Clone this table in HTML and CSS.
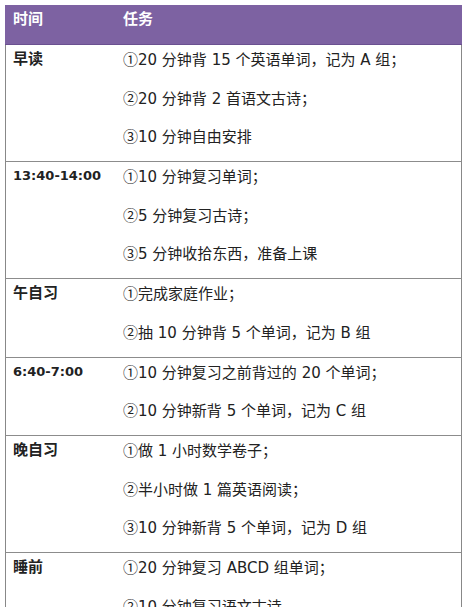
FILE: index.html
```html
<!DOCTYPE html>
<html lang="zh">
<head>
<meta charset="utf-8">
<link rel="stylesheet" href="styles.css">
</head>
<body>
<div class="schedule">
  <div class="head">
    <div class="c1">时间</div>
    <div class="c2">任务</div>
  </div>
  <div class="row">
    <div class="c1">早读</div>
    <div class="c2">
      <p><span class="n">①</span>20 分钟背 15 个英语单词，记为 A 组；</p>
      <p><span class="n">②</span>20 分钟背 2 首语文古诗；</p>
      <p><span class="n">③</span>10 分钟自由安排</p>
    </div>
  </div>
  <div class="row">
    <div class="c1 time">13:40-14:00</div>
    <div class="c2">
      <p><span class="n">①</span>10 分钟复习单词；</p>
      <p><span class="n">②</span>5 分钟复习古诗；</p>
      <p><span class="n">③</span>5 分钟收拾东西，准备上课</p>
    </div>
  </div>
  <div class="row">
    <div class="c1">午自习</div>
    <div class="c2">
      <p><span class="n">①</span>完成家庭作业；</p>
      <p><span class="n">②</span>抽 10 分钟背 5 个单词，记为 B 组</p>
    </div>
  </div>
  <div class="row">
    <div class="c1 time">6:40-7:00</div>
    <div class="c2">
      <p><span class="n">①</span>10 分钟复习之前背过的 20 个单词；</p>
      <p><span class="n">②</span>10 分钟新背 5 个单词，记为 C 组</p>
    </div>
  </div>
  <div class="row">
    <div class="c1">晚自习</div>
    <div class="c2">
      <p><span class="n">①</span>做 1 小时数学卷子；</p>
      <p><span class="n">②</span>半小时做 1 篇英语阅读；</p>
      <p><span class="n">③</span>10 分钟新背 5 个单词，记为 D 组</p>
    </div>
  </div>
  <div class="row">
    <div class="c1">睡前</div>
    <div class="c2">
      <p><span class="n">①</span>20 分钟复习 ABCD 组单词；</p>
      <p><span class="n">②</span>10 分钟复习语文古诗</p>
    </div>
  </div>
</div>
</body>
</html>
```
FILE: styles.css
```css
html, body {
  margin: 0;
  padding: 0;
  background: #ffffff;
}
body {
  font-family: "DejaVu Sans", "Noto Sans CJK SC", sans-serif;
  font-size: 15px;
  color: #222222;
}
.schedule {
  margin: 5px 0 0 5px;
  width: 457px;
}
.head {
  display: grid;
  grid-template-columns: 110px 1fr;
  background: #7d62a2;
  border-bottom: 1px solid #6a5090;
  color: #ffffff;
  font-weight: bold;
  padding: 4px 0 15px;
  line-height: 20px;
}
.head > div {
  height: 20px;
}
.row {
  display: grid;
  grid-template-columns: 110px 1fr;
  border-left: 1px solid #888888;
  border-right: 1px solid #888888;
  border-bottom: 1px solid #8c8c8c;
  padding: 4px 0 15px;
  line-height: 20px;
}
.c1 {
  padding-left: 8px;
}
.row .c1 {
  padding-left: 7px;
  font-weight: bold;
  height: 20px;
}
.row .time {
  font-size: 13px;
}
.c2 {
  padding-left: 8px;
}
.row .c2 {
  padding-left: 7px;
}
.c2 p {
  margin: 0 0 18.5px;
  height: 20px;
  white-space: nowrap;
}
.c2 p:last-child {
  margin-bottom: 0;
}
.n {
  font-family: "Noto Sans CJK SC", sans-serif;
}
```
